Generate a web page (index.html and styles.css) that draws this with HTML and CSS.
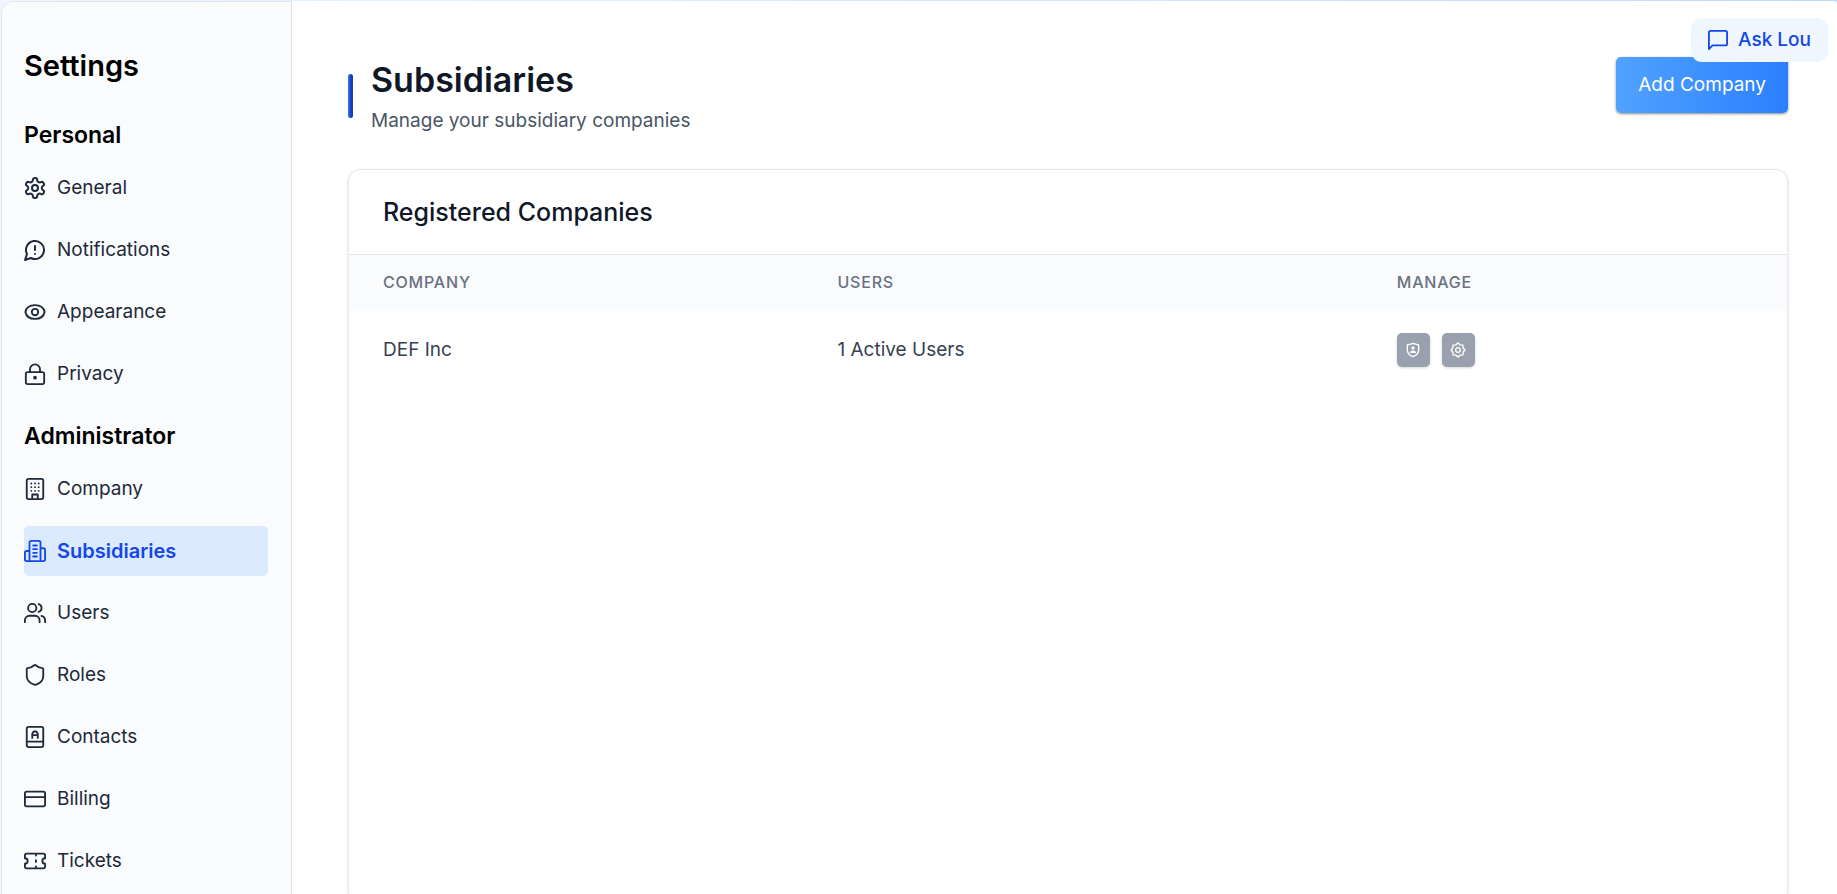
FILE: index.html
```html
<!DOCTYPE html>
<html lang="en">
<head>
<meta charset="utf-8">
<title>Subsidiaries</title>
<link rel="stylesheet" href="styles.css">
</head>
<body>
<div class="app">
  <aside class="sidebar">
    <h2 class="sidebar-title">Settings</h2>
    <nav class="nav">
      <h3 class="nav-heading">Personal</h3>
      <a class="nav-item" href="#general"><svg class="icon" viewBox="1 1 22 22"><path d="M12.200 2h-.4a2 2 0 0 0-2 2v.2a2 2 0 0 1-1 1.700l-.4.3a2 2 0 0 1-2 0l-.2-.1a2 2 0 0 0-2.700.7l-.2.4a2 2 0 0 0 .7 2.700l.2.1a2 2 0 0 1 1 1.700v.5a2 2 0 0 1-1 1.800l-.2.1a2 2 0 0 0-.7 2.700l.2.4a2 2 0 0 0 2.700.7l.2-.1a2 2 0 0 1 2 0l.4.3a2 2 0 0 1 1 1.700v.2a2 2 0 0 0 2 2h.4a2 2 0 0 0 2-2v-.2a2 2 0 0 1 1-1.700l.4-.3a2 2 0 0 1 2 0l.2.1a2 2 0 0 0 2.700-.7l.2-.4a2 2 0 0 0-.7-2.700l-.2-.1a2 2 0 0 1-1-1.800v-.5a2 2 0 0 1 1-1.700l.2-.1a2 2 0 0 0 .7-2.700l-.2-.4a2 2 0 0 0-2.700-.7l-.2.1a2 2 0 0 1-2 0l-.4-.3a2 2 0 0 1-1-1.700V4a2 2 0 0 0-2-2z"/><circle cx="12" cy="12" r="3"/></svg>General</a>
      <a class="nav-item" href="#notifications"><svg class="icon" viewBox="1 1 22 22"><path d="M7.900 20A9 9 0 1 0 4 16.100L2 22Z"/><path d="M12 8v4M12 16h.01"/></svg>Notifications</a>
      <a class="nav-item" href="#appearance"><svg class="icon" viewBox="0 0 24 24"><path d="M1.500 12C2.500 7 6.500 4.500 12 4.500S21.500 7 22.500 12C21.500 17 17.500 19.500 12 19.500S2.500 17 1.500 12Z"/><circle cx="12" cy="12" r="3.500"/></svg>Appearance</a>
      <a class="nav-item" href="#privacy"><svg class="icon" viewBox="0 0 24 24"><circle cx="12" cy="16" r="1"/><rect x="2" y="10" width="20" height="13" rx="2"/><path d="M6.500 10V7a5.500 5.500 0 0 1 11 0v3"/></svg>Privacy</a>
      <h3 class="nav-heading">Administrator</h3>
      <a class="nav-item" href="#company"><svg class="icon" viewBox="0 0 24 24"><rect x="3" y="1" width="18" height="22" rx="2"/><path d="M9 22v-4h6v4M8 6h.01M16 6h.01M12 6h.01M12 10h.01M12 14h.01M16 10h.01M16 14h.01M8 10h.01M8 14h.01"/></svg>Company</a>
      <a class="nav-item nav-item-active" href="#subsidiaries" aria-current="page"><svg class="icon" viewBox="0 0 24 24"><path d="M6 23V3a2 2 0 0 1 2-2h8a2 2 0 0 1 2 2v20ZM6 12H3a2 2 0 0 0-2 2v7a2 2 0 0 0 2 2h3M18 9h3a2 2 0 0 1 2 2v10a2 2 0 0 1-2 2h-3M10 6h4M10 10h4M10 14h4M10 18h4"/></svg>Subsidiaries</a>
      <a class="nav-item" href="#users"><svg class="icon" viewBox="0 0 24 24"><path d="M17 22v-2a5 5 0 0 0-5-5H6a5 5 0 0 0-5 5v2"/><circle cx="9" cy="6.500" r="4.500"/><path d="M23 22v-2a5 5 0 0 0-4-4.800M16 2.200a4.500 4.500 0 0 1 0 8.600"/></svg>Users</a>
      <a class="nav-item" href="#roles"><svg class="icon" viewBox="0 0 24 24"><path d="M21 13c0 5.500-3.500 8-8.300 9.700a1 1 0 0 1-.7 0C6.500 21 3 18.500 3 13V5.500a1 1 0 0 1 1-1c2 0 5-1.200 7.200-3.100a1.200 1.200 0 0 1 1.600 0C15 3.300 18 4.500 20 4.500a1 1 0 0 1 1 1z"/></svg>Roles</a>
      <a class="nav-item" href="#contacts"><svg class="icon" viewBox="0 0 24 24"><rect x="3" y="1" width="18" height="22" rx="2"/><path d="M3 17h18M9 13V8.500L10.500 6h3L15 8.500V13M9 10h6"/></svg>Contacts</a>
      <a class="nav-item" href="#billing"><svg class="icon" viewBox="0 0 24 24"><rect x="1" y="4" width="22" height="16" rx="2"/><path d="M1 10h22"/></svg>Billing</a>
      <a class="nav-item" href="#tickets"><svg class="icon" viewBox="0 0 24 24"><path d="M1 9a3 3 0 0 1 0 6v3a2 2 0 0 0 2 2h18a2 2 0 0 0 2-2v-3a3 3 0 0 1 0-6V6a2 2 0 0 0-2-2H3a2 2 0 0 0-2 2ZM13 4v2M13 18v2M13 11v2"/></svg>Tickets</a>
    </nav>
  </aside>
  <main class="main">
    <header class="page-header">
      <span class="accent"></span>
      <div class="page-titles">
        <h1 class="page-title">Subsidiaries</h1>
        <p class="page-subtitle">Manage your subsidiary companies</p>
      </div>
      <button class="add-button" type="button">Add Company</button>
    </header>
    <section class="card">
      <h2 class="card-title">Registered Companies</h2>
      <table class="table">
        <thead>
          <tr><th class="col-company">Company</th><th class="col-users">Users</th><th>Manage</th></tr>
        </thead>
        <tbody>
          <tr>
            <td>DEF Inc</td>
            <td>1 Active Users</td>
            <td>
              <div class="actions">
                <button class="action" type="button" aria-label="Manage permissions"><svg class="action-icon" viewBox="0 0 24 24"><path d="M12 2 20.500 4.500V12c0 4.500-3.500 8-8.500 10-5-2-8.500-5.500-8.500-10V4.500Z"/><circle class="solid" cx="12" cy="9" r="2.500"/><path class="solid" d="M7.500 16.500c0-5 9-5 9 0Z"/></svg></button>
                <button class="action" type="button" aria-label="Company settings"><svg class="action-icon" viewBox="0 0 24 24"><path d="M12 1.500 15.200 4.300 19.400 4.600 19.700 8.800 22.500 12 19.700 15.200 19.400 19.400 15.200 19.700 12 22.500 8.800 19.700 4.600 19.400 4.300 15.200 1.500 12 4.300 8.800 4.600 4.600 8.800 4.300Z"/><circle cx="12" cy="12" r="3.500"/></svg></button>
              </div>
            </td>
          </tr>
        </tbody>
      </table>
    </section>
  </main>
</div>
<button class="ask" type="button"><svg class="icon" viewBox="1 1 22 22"><path d="M22 16a2 2 0 0 1-2 2H6l-4 4V4a2 2 0 0 1 2-2h16a2 2 0 0 1 2 2z"/></svg>Ask Lou</button>
</body>
</html>
```
FILE: styles.css
```css
* {
  box-sizing: border-box;
}

body {
  margin: 0;
  padding: 1px 0 0 1px;
  height: 100vh;
  overflow: hidden;
  background: linear-gradient(90deg, #eff6ff, #bedbff);
  font-family: Inter, "Liberation Sans", sans-serif;
  font-size: 19px;
  line-height: 28px;
  color: #1e2939;
}

h1, h2, h3, p {
  margin: 0;
}

button {
  border: 0;
  font: inherit;
  cursor: pointer;
}

.app {
  display: flex;
  height: 100%;
  border-radius: 12px 3px 0 0;
  background: #fff;
  overflow: hidden;
}

.sidebar {
  flex: none;
  width: 291px;
  padding: 47px 23px 0 22px;
  border: 1px solid #e2e5ea;
  border-bottom: 0;
  border-top-left-radius: 12px;
  background: #f9fbfd;
  overflow: hidden;
}

.sidebar-title {
  font-size: 29px;
  line-height: 34px;
  font-weight: 600;
  color: #000;
}

.nav {
  display: flex;
  flex-direction: column;
  gap: 12px;
  padding-top: 36px;
}

.nav-heading {
  font-size: 23px;
  line-height: 32px;
  font-weight: 600;
  color: #000;
}

.nav-item + .nav-heading {
  padding-top: 9px;
}

.nav-item {
  display: flex;
  align-items: center;
  gap: 11px;
  height: 50px;
  border-radius: 5px;
  color: inherit;
  text-decoration: none;
}

.nav-item-active {
  background: #dbeafe;
  color: #1447e6;
  font-size: 20px;
  font-weight: 600;
}

.icon {
  flex: none;
  width: 22px;
  height: 22px;
  fill: none;
  stroke: currentColor;
  stroke-width: 2;
  stroke-linecap: round;
  stroke-linejoin: round;
}

.main {
  flex: 1;
  display: flex;
  flex-direction: column;
  gap: 34px;
  padding: 56px 49px 0 56px;
}

.page-header {
  display: flex;
  align-items: center;
  gap: 18px;
}

.accent {
  width: 5px;
  height: 44px;
  border-radius: 3px;
  background: linear-gradient(90deg, #2b7fff, #193cb8 60%);
}

.page-titles {
  flex: 1;
}

.page-title {
  font-size: 34px;
  line-height: 46px;
  font-weight: 600;
  color: #101828;
}

.page-subtitle {
  padding-top: 4px;
  color: #4a5565;
}

.add-button {
  align-self: flex-start;
  height: 56px;
  padding: 0 22px;
  border-radius: 5px;
  background: linear-gradient(90deg, #51a2ff, #2b7fff);
  box-shadow: 0 1px 3px rgba(0, 0, 0, 0.3), 0 1px 2px rgba(0, 0, 0, 0.2);
  color: #fff;
}

.card {
  flex: 1;
  border: 1px solid #e5e7eb;
  border-bottom: 0;
  border-radius: 12px 12px 0 0;
  box-shadow: 0 1px 3px rgba(0, 0, 0, 0.12);
  overflow: hidden;
}

.card-title {
  padding: 25px 34px;
  border-bottom: 1px solid #e5e7eb;
  font-size: 25px;
  line-height: 34px;
  font-weight: 500;
  color: #101828;
}

.table {
  width: 100%;
  border-collapse: collapse;
  table-layout: fixed;
}

.col-company {
  width: 31.6%;
}

.col-users {
  width: 38.9%;
}

.table th {
  padding: 13px 34px 15px;
  background: #f9fbfd;
  font-size: 16px;
  line-height: 28px;
  font-weight: 500;
  letter-spacing: 0.05em;
  text-align: left;
  text-transform: uppercase;
  color: #6a7282;
}

.table td {
  padding: 22px 34px;
  color: #364153;
}

.actions {
  display: flex;
  gap: 12px;
}

.action {
  display: grid;
  place-items: center;
  width: 33px;
  height: 34px;
  padding: 0;
  border-radius: 5px;
  background: #99a1af;
  box-shadow: 0 1px 3px rgba(0, 0, 0, 0.16);
  color: #fff;
}

.action-icon {
  width: 16px;
  height: 16px;
  fill: none;
  stroke: currentColor;
  stroke-width: 2;
}

.solid {
  fill: currentColor;
  stroke: none;
}

.ask {
  position: fixed;
  top: 18px;
  right: 9px;
  display: flex;
  align-items: center;
  gap: 10px;
  height: 44px;
  padding: 0 17px;
  border-radius: 11px;
  background: #eff6ff;
  color: #1447e6;
  font-weight: 500;
}

.ask .icon {
  width: 20px;
  height: 20px;
}
```
